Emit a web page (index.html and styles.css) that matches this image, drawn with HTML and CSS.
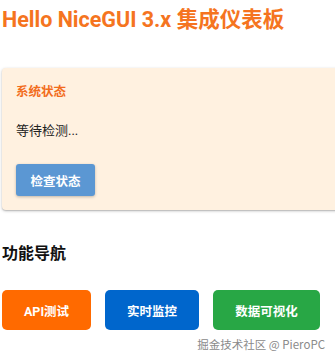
FILE: index.html
```html
<!DOCTYPE html>
<html lang="zh">
<head>
<meta charset="utf-8">
<link rel="stylesheet" href="styles.css">
</head>
<body>
<div class="page">
  <h1 class="title">Hello NiceGUI 3.x 集成仪表板</h1>
  <section class="card">
    <div class="card-title">系统状态</div>
    <div class="card-text">等待检测...</div>
    <button class="btn btn-check">检查状态</button>
  </section>
  <h2 class="section-title">功能导航</h2>
  <div class="nav">
    <button class="btn nav-btn orange">API测试</button>
    <button class="btn nav-btn blue">实时监控</button>
    <button class="btn nav-btn green">数据可视化</button>
  </div>
  <div class="watermark">掘金技术社区 @ PieroPC</div>
</div>
</body>
</html>
```
FILE: styles.css
```css
html, body {
  margin: 0;
  padding: 0;
  background: #ffffff;
}
body {
  font-family: Roboto, "Noto Sans CJK SC", sans-serif;
  width: 335px;
  height: 355px;
  overflow: hidden;
  position: relative;
}
.page {
  padding: 0 0 0 2px;
}
.title {
  margin: 0;
  padding-top: 8px;
  height: 24px;
  line-height: 24px;
  font-size: 21.5px;
  font-weight: 700;
  color: #f57420;
  white-space: nowrap;
}
.card {
  margin-top: 36px;
  width: 345px;
  height: 142px;
  box-sizing: border-box;
  background: #fff1e0;
  border-radius: 4px;
  box-shadow: 0 1px 3px rgba(0,0,0,0.25), 0 1px 1px rgba(0,0,0,0.1);
  padding: 16px 14px 0;
}
.card-title {
  font-size: 12.5px;
  font-weight: 700;
  color: #f26c1c;
  line-height: 16px;
}
.card-text {
  margin-top: 23px;
  font-size: 13px;
  color: #222;
  line-height: 16px;
}
.btn {
  border: none;
  font-family: Roboto, "Noto Sans CJK SC", sans-serif;
  font-weight: 700;
  color: #fff;
  cursor: pointer;
  padding: 0;
}
.btn-check {
  margin-top: 25px;
  width: 79px;
  height: 32px;
  border-radius: 3px;
  background: #5b97d3;
  font-size: 12.5px;
  box-shadow: 0 1px 3px rgba(0,0,0,0.25);
}
.section-title {
  margin: 0;
  margin-top: 34px;
  font-size: 16px;
  font-weight: 700;
  color: #111;
  line-height: 20px;
}
.nav {
  margin-top: 26px;
  display: flex;
  gap: 14px;
}
.nav-btn {
  height: 40px;
  border-radius: 5px;
  font-size: 12.5px;
}
.orange { background: #ff6a00; width: 89px; }
.blue { background: #0066cc; width: 94px; }
.green { background: #28a745; width: 107px; }
.watermark {
  position: absolute;
  right: 10px;
  bottom: 3px;
  font-size: 11.5px;
  color: #8a8a8a;
  font-family: "Noto Sans CJK SC", "Noto Sans", sans-serif;
}
```
